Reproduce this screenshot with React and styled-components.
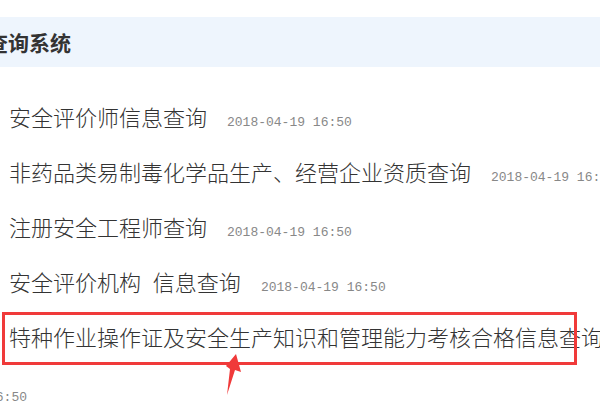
import styled, { createGlobalStyle } from "styled-components";

const GlobalStyle = createGlobalStyle`
  html, body {
    margin: 0;
    padding: 0;
    background: #fff;
    overflow: hidden;
  }
  body {
    font-family: "Noto Sans CJK SC", "Noto Sans", sans-serif;
  }
`;

const Page = styled.div`
  position: relative;
  width: 600px;
  height: 403px;
  overflow: hidden;
  padding-top: 17px;
  box-sizing: border-box;
`;

const PanelHeader = styled.div`
  height: 50px;
  background: #eef5fd;
  display: flex;
  align-items: center;
`;

const PanelTitle = styled.h3`
  margin: 0 0 0 -13px;
  font-size: 21px;
  font-weight: 700;
  color: #333;
  line-height: 1;
`;

const List = styled.ul`
  list-style: none;
  margin: 22px 0 0 -12px;
  padding: 0;
  width: 730px;
`;

const Item = styled.li`
  text-indent: 21px;
  line-height: 55px;
  font-size: 22px;
  font-weight: 300;
  color: #333;
`;

const Title = styled.a`
  color: #333;
  text-decoration: none;
  word-spacing: ${(p) => (p.$wide ? "7px" : "0")};
`;

const Date = styled.span`
  margin-left: 20px;
  font-family: "Liberation Mono", "DejaVu Sans Mono", monospace;
  font-size: 13px;
  font-weight: 400;
  line-height: 13px;
  color: #888;
`;

const Highlight = styled.div`
  position: absolute;
  left: 2px;
  top: 312px;
  width: 575px;
  height: 53px;
  box-sizing: border-box;
  border: 3px solid #f03a3a;
  pointer-events: none;
`;

const Arrow = styled.svg`
  position: absolute;
  left: 0;
  top: 0;
  pointer-events: none;
`;

const items = [
  { title: "安全评价师信息查询", date: "2018-04-19 16:50" },
  { title: "非药品类易制毒化学品生产、经营企业资质查询", date: "2018-04-19 16:50" },
  { title: "注册安全工程师查询", date: "2018-04-19 16:50" },
  { title: "安全评价机构 信息查询", date: "2018-04-19 16:50", wide: true },
  { title: "特种作业操作证及安全生产知识和管理能力考核合格信息查询", date: "2018-04-19 16:50" },
];

export default function App() {
  return (
    <>
      <GlobalStyle />
      <Page>
        <PanelHeader>
          <PanelTitle>查询系统</PanelTitle>
        </PanelHeader>
        <List>
          {items.map((it) => (
            <Item key={it.title}>
              <Title href="#" $wide={it.wide}>{it.title}</Title>
              <Date>{it.date}</Date>
            </Item>
          ))}
        </List>
        <Highlight />
        <Arrow width="600" height="403" viewBox="0 0 600 403">
          <path d="M236 354 L241 372 L235 370 L227 395 L230 369 L226 366 Z" fill="#f03a3a" />
        </Arrow>
      </Page>
    </>
  );
}
